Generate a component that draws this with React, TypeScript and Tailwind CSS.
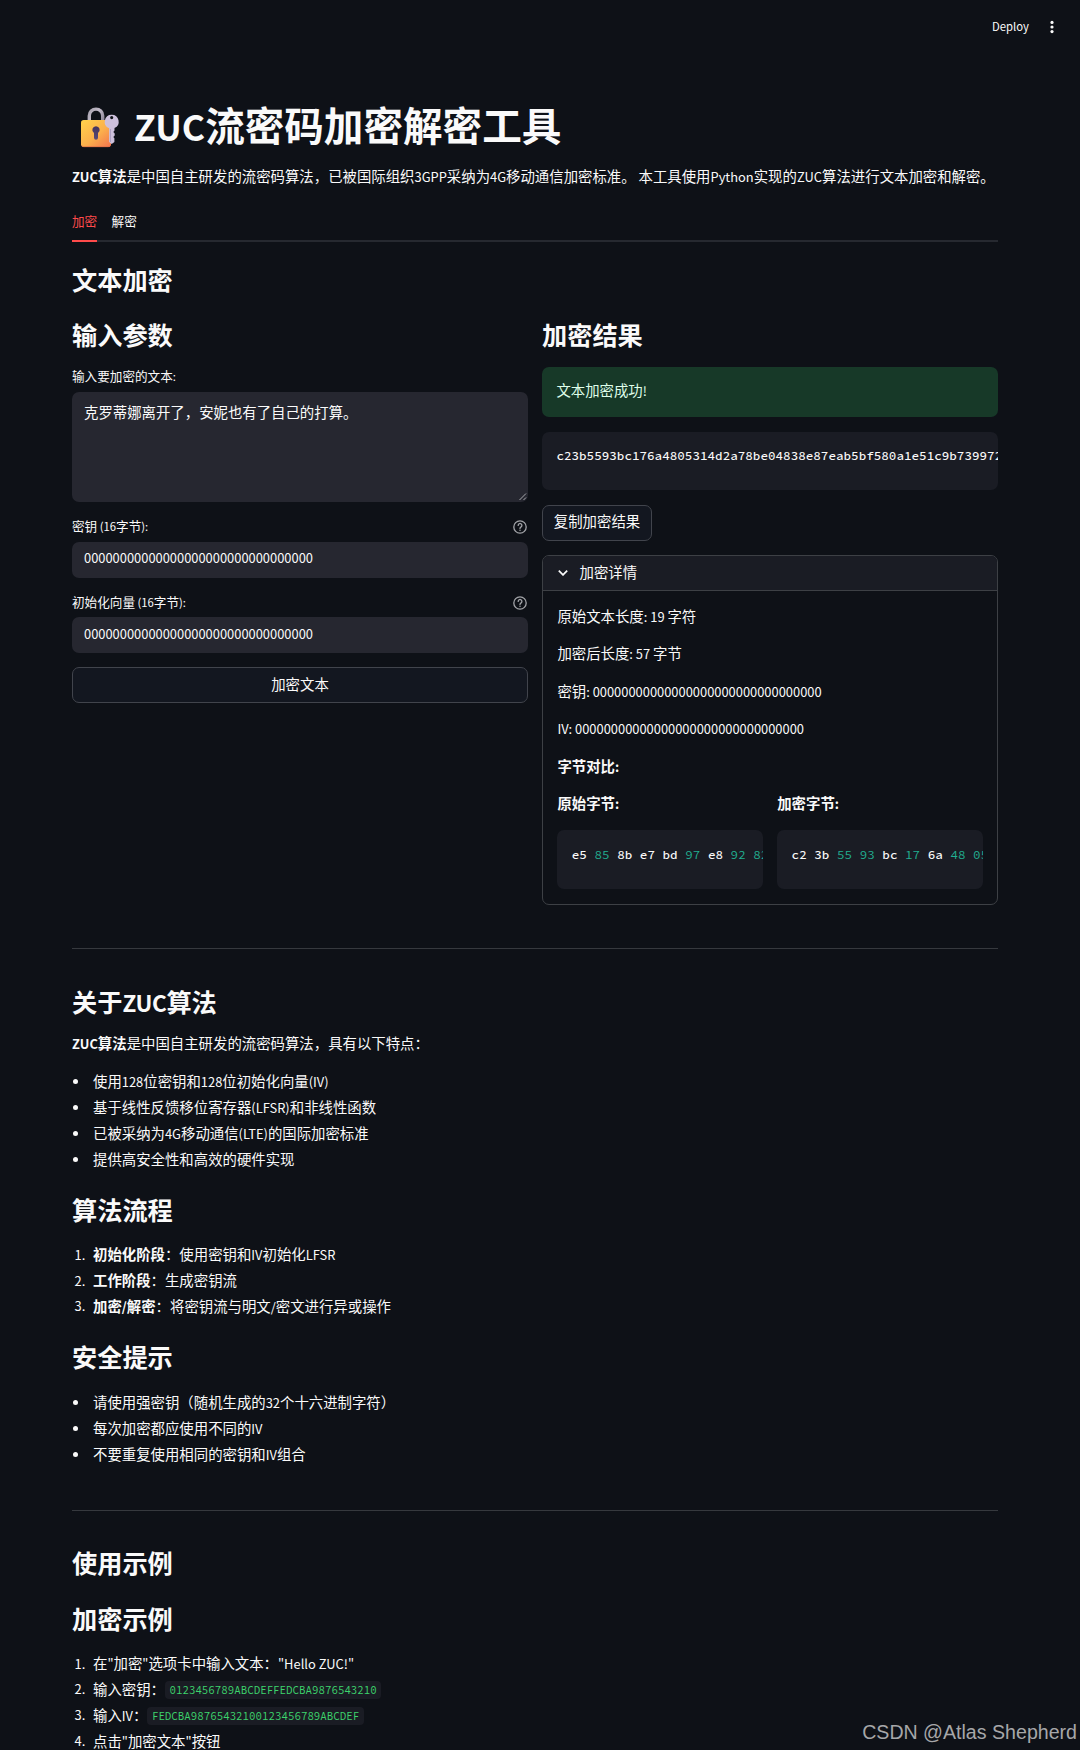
import React from "react";

/* Latin runs are set slightly smaller than the CJK glyphs around them. */
function T({ children }: { children: string }) {
  return (
    <>
      {children.split(/([\x20-\x7e]+)/).map((part, i) =>
        i % 2 ? (
          <span key={i} className="text-[0.896em] leading-[0]">
            {part}
          </span>
        ) : (
          part
        ),
      )}
    </>
  );
}

function LockKey() {
  return (
    <svg viewBox="0 0 40 42" className="h-[42px] w-[40px]" fill="none">
      <defs>
        <linearGradient id="body" x1="4" y1="14" x2="28" y2="41" gradientUnits="userSpaceOnUse">
          <stop stopColor="#ffcf4b" />
          <stop offset="0.55" stopColor="#fbb04c" />
          <stop offset="1" stopColor="#f47a4e" />
        </linearGradient>
        <linearGradient id="shackle" x1="8" y1="2" x2="24" y2="14" gradientUnits="userSpaceOnUse">
          <stop stopColor="#a39fa9" />
          <stop offset="0.5" stopColor="#c1bac8" />
          <stop offset="1" stopColor="#8f8798" />
        </linearGradient>
        <linearGradient id="hole" x1="16" y1="20" x2="16" y2="34" gradientUnits="userSpaceOnUse">
          <stop stopColor="#43335e" />
          <stop offset="1" stopColor="#5a4a78" />
        </linearGradient>
      </defs>
      <path d="M9.300 16V9.800a6.700 6.700 0 0 1 13.400 0V16" stroke="url(#shackle)" strokeWidth="3.400" />
      <rect x="1" y="14" width="30" height="27" rx="2.800" fill="url(#body)" />
      <path d="M1.500 39.300a2.500 2.500 0 0 0 2.300 1.400h24.400a2.500 2.500 0 0 0 2.300-1.400" stroke="#dc6a45" strokeWidth="0.700" />
      <path d="M16 20.200a3.700 3.700 0 0 0-2 6.800v4.700a2 2 0 0 0 4 0V27a3.700 3.700 0 0 0-2-6.800Z" fill="url(#hole)" />
      <path
        fillRule="evenodd"
        d="M31.700 8.700a7 7 0 0 0-2.600 13.500V36l2.600 1.900 2.700-2v-3.600l-1.100-1.200 1.400-1.600v-2l-1.400-1.500 1.200-1.400v-2.500A7 7 0 0 0 31.700 8.700Zm0 1.300a1.600 1.600 0 1 1 0 3.200 1.600 1.600 0 0 1 0-3.200Z"
        fill="#cdc0dc"
      />
      <path d="M30.500 23v13" stroke="#a99bbd" strokeWidth="0.900" />
    </svg>
  );
}

function H2({ className = "", children }: { className?: string; children: string }) {
  return (
    <h2
      className={`h-[30px] text-[25.2px] leading-[30px] font-bold whitespace-nowrap [&>span]:tracking-[-0.4px] ${className}`}
    >
      <T>{children}</T>
    </h2>
  );
}

function Help() {
  return (
    <svg viewBox="0 0 16 16" className="mt-[2px] h-4 w-4" fill="none" stroke="#a3a5a9" strokeWidth="1.300" strokeLinecap="round">
      <circle cx="8" cy="8" r="6.200" />
      <path d="M6.200 6.400a1.850 1.850 0 1 1 2.900 1.500c-.7.450-1.100.8-1.100 1.500" />
      <path d="M8 11.300v.05" strokeWidth="1.500" />
    </svg>
  );
}

function Field({ label, value, className }: { label: string; value: string; className: string }) {
  return (
    <div className="mt-[14px]">
      <div className="flex h-5 items-center justify-between text-[12.6px] leading-5">
        <label>
          <T>{label}</T>
        </label>
        <Help />
      </div>
      <div className={`flex h-9 items-center rounded-[7px] bg-[#262730] px-3 ${className}`}>
        <span>
          <T>{value}</T>
        </span>
      </div>
    </div>
  );
}

function Bytes({ title, bytes }: { title: string; bytes: string }) {
  return (
    <div className="min-w-0 flex-1">
      <p className="font-bold">
        <T>{title}</T>
      </p>
      <pre className="mt-4 h-[59px] overflow-hidden rounded-[7px] bg-[#1a1c24] pt-[14px] pl-[14.4px] font-['Source_Code_Pro','Liberation_Mono',monospace] text-[12.6px] leading-[22px] font-medium">
        {bytes.split(" ").map((b, i) => (
          <span key={i} className={/^\d+$/.test(b) ? "font-normal text-[#21b092]" : ""}>
            {b}{" "}
          </span>
        ))}
      </pre>
    </div>
  );
}

function Items({ items, ordered, className }: { items: React.ReactNode[]; ordered?: boolean; className: string }) {
  return (
    <ul className={className}>
      {items.map((item, i) => (
        <li key={i} className="flex h-[25.8px] items-center leading-[23px] whitespace-nowrap">
          {ordered ? (
            <span className="w-[21px] pl-[2.500px] pt-px text-[12.9px]">{i + 1}.</span>
          ) : (
            <span className="w-[21px] pt-[2px] pl-[1px]">
              <span className="block h-[5px] w-[5px] rounded-full bg-[#fafafa]" />
            </span>
          )}
          <div className="flex items-center">{item}</div>
        </li>
      ))}
    </ul>
  );
}

function Code({ children }: { children: string }) {
  return (
    <code className="mt-[3px] block h-[18px] rounded-[4px] bg-[#1a1c24] px-[4.500px] font-['Source_Code_Pro','Liberation_Mono',monospace] text-[10.8px] leading-[18px] text-[#3dd56d]">
      {children}
    </code>
  );
}

const zeros = "00000000000000000000000000000000";

export default function App() {
  return (
    <div
      lang="zh-CN"
      className="relative h-[1750px] w-[1080px] overflow-hidden bg-[#0e1117] font-['Noto_Sans_CJK_SC',sans-serif] text-[14.4px] leading-[23px] text-[#fafafa]"
    >
      <header className="flex h-[54px] items-center justify-end pr-[26px] text-[11.3px]">
        <span className="-mt-px">Deploy</span>
        <svg viewBox="0 0 4 14" className="ml-[21px] h-[14px] w-1" fill="#fafafa">
          <circle cx="2" cy="2.400" r="1.600" />
          <circle cx="2" cy="7" r="1.600" />
          <circle cx="2" cy="11.600" r="1.600" />
        </svg>
      </header>

      <main className="mx-[72px] w-[926px] pt-[45px]">
        <h1 className="flex h-12 items-center text-[39.6px] leading-[48px] font-bold whitespace-nowrap">
          <span className="mt-[7px] mr-[14px] ml-[8px]">
            <LockKey />
          </span>
          <span className="pt-[2px]">
            <T>ZUC流密码加密解密工具</T>
          </span>
        </h1>
        <p className="mt-[17px] h-6 leading-6 whitespace-nowrap">
          <b>
            <T>ZUC算法</T>
          </b>
          <T>是中国自主研发的流密码算法，已被国际组织3GPP采纳为4G移动通信加密标准。 本工具使用Python实现的ZUC算法进行文本加密和解密。</T>
        </p>

        <nav className="mt-[14px] flex h-10 gap-[14.4px] text-[12.6px] leading-[38px] shadow-[inset_0_-2px_0_#262930]">
          <span className="border-b-2 border-[#ff4b4b] text-[#ff4b4b]">加密</span>
          <span>解密</span>
        </nav>

        <H2 className="mt-[22px]">文本加密</H2>

        <div className="mt-[25px] flex gap-[14px]">
          <section className="w-[456px]">
            <H2>输入参数</H2>
            <p className="mt-[17px] h-5 text-[12.6px] leading-5">
              <T>输入要加密的文本:</T>
            </p>
            <div className="relative mt-[6px] h-[110px] rounded-[7px] bg-[#262730] px-3 pt-[8px]">
              克罗蒂娜离开了，安妮也有了自己的打算。
              <svg viewBox="0 0 8 8" className="absolute right-[1px] bottom-[1px] h-2 w-2" stroke="#b8b9bd" strokeWidth="0.900">
                <path d="M0.500 7 7 0.500M4.500 7 7 4.500" />
              </svg>
            </div>
            <Field label="密钥 (16字节):" value={zeros} className="mt-[6px] pb-[7px]" />
            <Field label="初始化向量 (16字节):" value={zeros} className="mt-[5px] pb-[5px]" />
            <button className="mt-[14px] block h-9 w-full rounded-[7px] border border-[#41444c] bg-[#131720] pb-[3px] leading-[31px]">
              加密文本
            </button>
          </section>

          <section className="w-[456px]">
            <H2>加密结果</H2>
            <div className="mt-[18px] h-[50px] rounded-[7px] bg-[#173928] px-[14.4px] pt-[11px] text-[#dffde9]">
              <T>文本加密成功!</T>
            </div>
            <pre className="mt-[15px] h-[58px] overflow-hidden rounded-[7px] bg-[#1a1c24] pt-[13px] pl-[14.4px] font-['Source_Code_Pro','Liberation_Mono',monospace] text-[12.6px] leading-[22px] font-medium">
              c23b5593bc176a4805314d2a78be04838e87eab5bf580a1e51c9b739972
            </pre>
            <button className="mt-[15px] block h-9 w-[110px] rounded-[7px] border border-[#41444c] bg-[#131720] pb-[4px] leading-[30px]">
              复制加密结果
            </button>
            <div className="mt-[14px] h-[350px] overflow-hidden rounded-[7px] border border-[#3d4045]">
              <div className="flex h-[35px] items-center border-b border-[#3d4045] bg-[#1a1c24] pl-[15px]">
                <svg viewBox="0 0 10 6" className="h-[6px] w-[10px]" fill="none" stroke="#fafafa" strokeWidth="1.700">
                  <path d="M0.800 0.700 5 4.900 9.200 0.700" />
                </svg>
                <span className="mb-[3px] ml-[11.500px]">加密详情</span>
              </div>
              <div className="flex flex-col gap-[14.4px] px-[14.4px] pt-[13px]">
                <p>
                  <T>原始文本长度: 19 字符</T>
                </p>
                <p>
                  <T>加密后长度: 57 字节</T>
                </p>
                <p>
                  <T>{`密钥: ${zeros}`}</T>
                </p>
                <p>
                  <T>{`IV: ${zeros}`}</T>
                </p>
                <p className="font-bold">
                  <T>字节对比:</T>
                </p>
                <div className="flex gap-[14.4px]">
                  <Bytes title="原始字节:" bytes="e5 85 8b e7 bd 97 e8 92 82" />
                  <Bytes title="加密字节:" bytes="c2 3b 55 93 bc 17 6a 48 05" />
                </div>
              </div>
            </div>
          </section>
        </div>

        <hr className="mt-[43px] border-t border-[#36393e]" />
        <H2 className="mt-[37px]">关于ZUC算法</H2>
        <p className="mt-[15px] h-6 leading-6">
          <b>
            <T>ZUC算法</T>
          </b>
          是中国自主研发的流密码算法，具有以下特点：
        </p>
        <Items
          className="mt-[13px]"
          items={[
            "使用128位密钥和128位初始化向量(IV)",
            "基于线性反馈移位寄存器(LFSR)和非线性函数",
            "已被采纳为4G移动通信(LTE)的国际加密标准",
            "提供高安全性和高效的硬件实现",
          ].map((row, i) => (
            <span key={i}>
              <T>{row}</T>
            </span>
          ))}
        />
        <H2 className="mt-[22.800px]">算法流程</H2>
        <Items
          ordered
          className="mt-[17px]"
          items={[
            ["初始化阶段", "：使用密钥和IV初始化LFSR"],
            ["工作阶段", "：生成密钥流"],
            ["加密/解密", "：将密钥流与明文/密文进行异或操作"],
          ].map(([term, text], i) => (
            <span key={i}>
              <b>
                <T>{term}</T>
              </b>
              <T>{text}</T>
            </span>
          ))}
        />
        <H2 className="mt-[23px]">安全提示</H2>
        <Items
          className="mt-[17.500px]"
          items={["请使用强密钥（随机生成的32个十六进制字符）", "每次加密都应使用不同的IV", "不要重复使用相同的密钥和IV组合"].map(
            (row, i) => (
              <span key={i}>
                <T>{row}</T>
              </span>
            ),
          )}
        />
        <hr className="mt-[43.500px] border-t border-[#36393e]" />
        <H2 className="mt-[36px]">使用示例</H2>
        <H2 className="mt-[26px]">加密示例</H2>
        <Items
          ordered
          className="mt-[17px]"
          items={[
            <span>
              <T>在"加密"选项卡中输入文本："Hello ZUC!"</T>
            </span>,
            <>
              <span>输入密钥：</span>
              <Code>0123456789ABCDEFFEDCBA9876543210</Code>
            </>,
            <>
              <span>
                <T>输入IV：</T>
              </span>
              <Code>FEDCBA98765432100123456789ABCDEF</Code>
            </>,
            <span>
              <T>点击"加密文本"按钮</T>
            </span>,
          ]}
        />
      </main>

      <div className="absolute right-[3px] bottom-[6px] font-['Liberation_Sans',sans-serif] text-[19.6px] leading-[24px] text-[#a6a7a9]">
        CSDN @Atlas Shepherd
      </div>
    </div>
  );
}
